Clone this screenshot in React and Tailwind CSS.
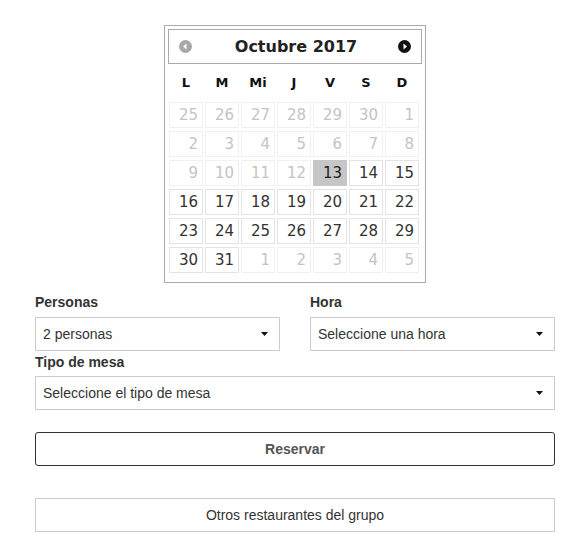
import React from 'react'

const cal = { fontFamily: '"DejaVu Sans", Verdana, sans-serif' }
const form = { fontFamily: '"Liberation Sans", Arial, sans-serif' }

const dayNames = ['L', 'M', 'Mi', 'J', 'V', 'S', 'D']

function buildDays() {
    const days = []
    for (let d = 25; d <= 30; d++) days.push({ n: d, kind: 'off' })
    for (let d = 1; d <= 31; d++) {
        if (d < 13) days.push({ n: d, kind: 'off' })
        else if (d === 13) days.push({ n: d, kind: 'sel' })
        else days.push({ n: d, kind: 'on' })
    }
    for (let d = 1; d <= 5; d++) days.push({ n: d, kind: 'off' })
    return days
}

function Caret() {
    return (
        <svg width="7" height="4" viewBox="0 0 7 4" className="shrink-0">
            <path d="M0 0 L7 0 L3.5 4 Z" fill="#111" />
        </svg>
    )
}

function Select({ label }) {
    return (
        <div className="h-[34px] border border-[#cccccc] bg-white flex items-center justify-between pl-[7px] pr-[11px] text-[14px] text-[#333]">
            <span>{label}</span>
            <Caret />
        </div>
    )
}

function Calendar() {
    const days = buildDays()
    return (
        <div style={cal} className="w-[262px] border border-[#aaaaaa] p-[3px] pb-[9px] bg-white">
            <div className="h-[35px] border border-[#aaaaaa] flex items-center justify-between px-[10px]">
                <svg width="13" height="13" viewBox="0 0 13 13">
                    <circle cx="6.5" cy="6.5" r="6.5" fill="#a8a8a8" />
                    <path d="M4 6.5 L7.5 3.5 L7.5 9.5 Z" fill="#fff" />
                </svg>
                <span className="text-[16px] font-bold text-[#222] pl-[2px]">Octubre 2017</span>
                <svg width="13" height="13" viewBox="0 0 13 13">
                    <circle cx="6.5" cy="6.5" r="6.5" fill="#111" />
                    <path d="M9 6.5 L5.5 3.5 L5.5 9.5 Z" fill="#fff" />
                </svg>
            </div>
            <div className="grid grid-cols-[repeat(7,34px)] gap-x-[2px] pl-px h-[38px] items-center">
                {dayNames.map((d) => (
                    <div key={d} className="text-center text-[13px] font-bold text-[#111]">{d}</div>
                ))}
            </div>
            <div className="grid grid-cols-[repeat(7,34px)] gap-x-[2px] gap-y-[3px] pl-px">
                {days.map((d, i) => (
                    <div
                        key={i}
                        className={
                            d.kind === 'sel'
                                ? 'h-[26px] border border-[#c5c5c5] bg-[#c6c6c6] text-[#212121] text-[15px] flex items-center justify-end pr-[4px]'
                                : d.kind === 'on'
                                    ? 'h-[26px] border border-[#e3e3e3] bg-white text-[#333] text-[15px] flex items-center justify-end pr-[4px]'
                                    : 'h-[26px] border border-[#f0f0f0] bg-white text-[#c4c4c4] text-[15px] flex items-center justify-end pr-[4px]'
                        }
                    >
                        {d.n}
                    </div>
                ))}
            </div>
        </div>
    )
}

export default function App() {
    return (
        <div className="w-[586px] h-[560px] bg-white pt-[25px]">
            <div className="w-[520px] ml-[35px]">
                <div className="flex justify-center">
                    <Calendar />
                </div>
                <div style={form} className="mt-[9px]">
                    <div className="grid grid-cols-2 gap-x-[30px]">
                        <div>
                            <div className="h-[20px] leading-[20px] text-[14px] font-bold text-[#333] mb-[5px]">Personas</div>
                            <Select label="2 personas" />
                        </div>
                        <div>
                            <div className="h-[20px] leading-[20px] text-[14px] font-bold text-[#333] mb-[5px]">Hora</div>
                            <Select label="Seleccione una hora" />
                        </div>
                    </div>
                    <div className="h-[20px] leading-[20px] text-[14px] font-bold text-[#333] mt-px mb-[4px]">Tipo de mesa</div>
                    <Select label="Seleccione el tipo de mesa" />
                    <button className="mt-[22px] w-full h-[34px] border border-[#333] rounded-[3px] bg-white text-[14px] font-bold text-[#555]">
                        Reservar
                    </button>
                    <button className="mt-[32px] w-full h-[34px] border border-[#cccccc] bg-white text-[14px] text-[#333]">
                        Otros restaurantes del grupo
                    </button>
                </div>
            </div>
        </div>
    )
}
